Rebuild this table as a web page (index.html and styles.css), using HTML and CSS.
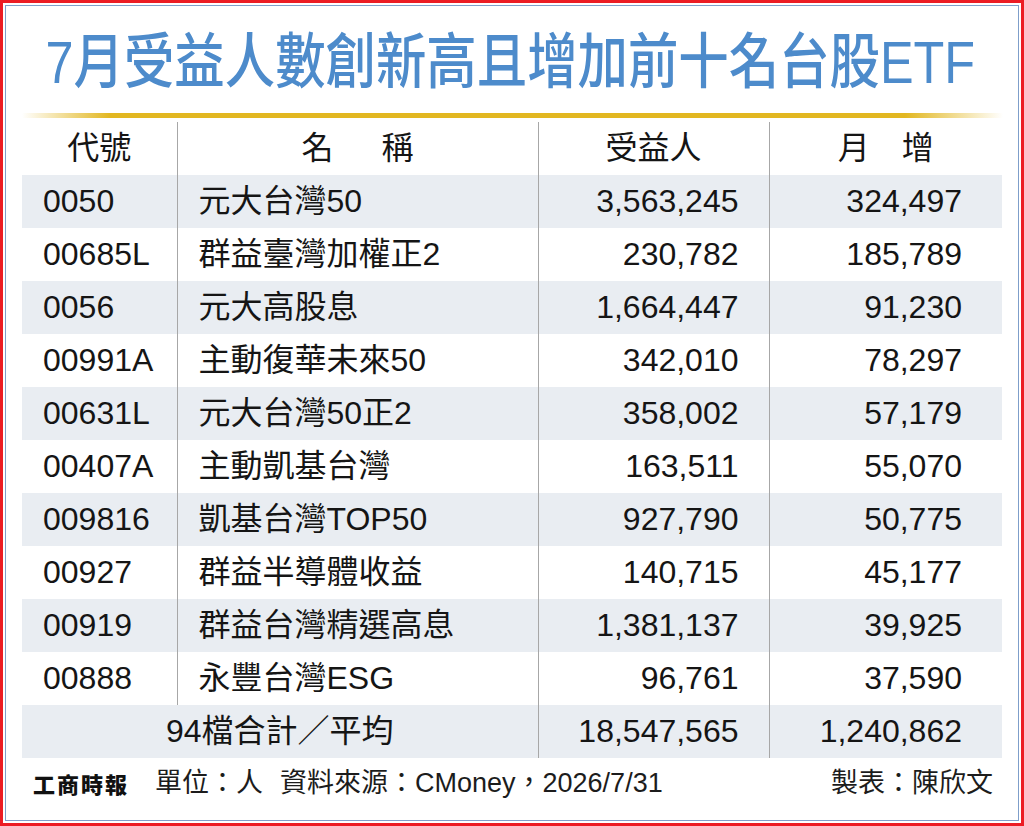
FILE: index.html
```html
<!DOCTYPE html>
<html lang="zh-Hant">
<head>
<meta charset="utf-8">
<title>7月受益人數創新高且增加前十名台股ETF</title>
<link rel="stylesheet" href="styles.css">
</head>
<body>
<div class="frame">
  <div class="panel">
    <h1 class="title">7月受益人數創新高且增加前十名台股ETF</h1>
    <div class="rule"></div>
    <table class="grid">
      <colgroup>
        <col class="c1"><col class="c2"><col class="c3"><col class="c4">
      </colgroup>
      <thead>
        <tr><th>代號</th><th>名<span class="gap"></span>稱</th><th>受益人</th><th>月　增</th></tr>
      </thead>
      <tbody>
        <tr class="alt"><td>0050</td><td>元大台灣50</td><td class="num">3,563,245</td><td class="num last">324,497</td></tr>
        <tr><td>00685L</td><td>群益臺灣加權正2</td><td class="num">230,782</td><td class="num last">185,789</td></tr>
        <tr class="alt"><td>0056</td><td>元大高股息</td><td class="num">1,664,447</td><td class="num last">91,230</td></tr>
        <tr><td>00991A</td><td>主動復華未來50</td><td class="num">342,010</td><td class="num last">78,297</td></tr>
        <tr class="alt"><td>00631L</td><td>元大台灣50正2</td><td class="num">358,002</td><td class="num last">57,179</td></tr>
        <tr><td>00407A</td><td>主動凱基台灣</td><td class="num">163,511</td><td class="num last">55,070</td></tr>
        <tr class="alt"><td>009816</td><td>凱基台灣TOP50</td><td class="num">927,790</td><td class="num last">50,775</td></tr>
        <tr><td>00927</td><td>群益半導體收益</td><td class="num">140,715</td><td class="num last">45,177</td></tr>
        <tr class="alt"><td>00919</td><td>群益台灣精選高息</td><td class="num">1,381,137</td><td class="num last">39,925</td></tr>
        <tr><td>00888</td><td>永豐台灣ESG</td><td class="num">96,761</td><td class="num last">37,590</td></tr>
        <tr class="alt total"><td colspan="2" class="sum">94檔合計／平均</td><td class="num">18,547,565</td><td class="num last">1,240,862</td></tr>
      </tbody>
    </table>
    <div class="foot">
      <span class="logo">工商時報</span>
      <span class="src">單位：人<span class="sp"></span>資料來源：CMoney，2026/7/31</span>
      <span class="maker">製表：陳欣文</span>
    </div>
  </div>
</div>
</body>
</html>
```
FILE: styles.css
```css
html, body {
  margin: 0;
  padding: 0;
  background: #ffffff;
}

body {
  font-family: "Liberation Sans", "Noto Sans CJK TC", sans-serif;
  color: #151515;
}

.frame {
  width: 1024px;
  height: 826px;
  box-sizing: border-box;
  border: 3px solid #ec1c24;
  padding: 2px;
  background: #ffffff;
}

.panel {
  height: 100%;
  box-sizing: border-box;
  border: 1px solid #7f9fca;
  padding: 29px 15px 0 16px;
}

.title {
  margin: 0;
  width: 1140px;
  padding-left: 28px;
  box-sizing: border-box;
  height: 56px;
  font-size: 60px;
  line-height: 56px;
  font-weight: 500;
  color: #4d8bcb;
  white-space: nowrap;
  transform: scaleX(0.84);
  transform-origin: left center;
}

.rule {
  margin-top: 22px;
  height: 5px;
  background: linear-gradient(to right,
    rgba(226, 183, 33, 0) 0%,
    #e2b721 9%,
    #e2b721 90%,
    rgba(226, 183, 33, 0) 100%);
}

.grid {
  margin-top: 4px;
  width: 980px;
  border-collapse: collapse;
  table-layout: fixed;
  font-size: 32px;
}

.c1 { width: 155px; }
.c2 { width: 361px; }
.c3 { width: 231px; }
.c4 { width: 233px; }

.grid th,
.grid td {
  height: 53px;
  padding: 0;
  line-height: 53px;
  white-space: nowrap;
  font-weight: 400;
  vertical-align: middle;
}

.grid th {
  text-align: center;
}

.grid td {
  text-align: left;
  padding-left: 21px;
}

.grid th + th,
.grid td + td {
  border-left: 1px solid #a7a7a7;
}

.grid td.num {
  text-align: right;
  padding-left: 0;
  padding-right: 30px;
}

.grid td.num.last {
  padding-right: 40px;
}

.grid td.sum {
  text-align: center;
  padding-left: 0;
}

.gap {
  display: inline-block;
  width: 48px;
}

.alt td {
  background: #e9edf2;
}

.foot {
  display: flex;
  align-items: center;
  margin-top: 10px;
  height: 30px;
  padding: 0 10px 0 11px;
  font-size: 27px;
  line-height: 30px;
  color: #1c1c1c;
}

.logo {
  font-family: "Noto Sans CJK TC", sans-serif;
  font-weight: 900;
  font-size: 22px;
  letter-spacing: 2px;
  color: #111;
  margin-right: 26px;
}

.sp {
  display: inline-block;
  width: 17px;
}

.maker {
  margin-left: auto;
}
```
